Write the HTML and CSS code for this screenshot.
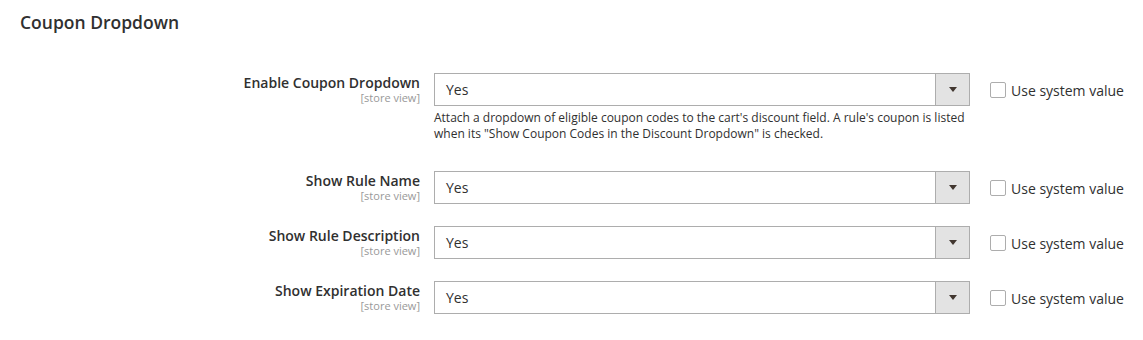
FILE: index.html
```html
<!DOCTYPE html>
<html lang="en">
<head>
    <meta charset="UTF-8">
    <meta name="viewport" content="width=device-width, initial-scale=1.0">
    <title>Coupon Dropdown</title>
    <link rel="stylesheet" href="styles.css">
</head>
<body>
    <div class="section-title">Coupon Dropdown</div>

    <div class="fieldset">
        <div class="field-row">
            <div class="field-label">
                <span class="label-text">Enable Coupon Dropdown</span>
                <span class="scope">[store view]</span>
            </div>
            <div class="field-value">
                <div class="select">
                    <span class="select-text">Yes</span>
                    <span class="select-btn"><span class="arrow"></span></span>
                </div>
                <p class="note">Attach a dropdown of eligible coupon codes to the cart's discount field. A rule's coupon is listed when its "Show Coupon Codes in the Discount Dropdown" is checked.</p>
            </div>
            <label class="use-default"><span class="checkbox"></span>Use system value</label>
        </div>

        <div class="field-row">
            <div class="field-label">
                <span class="label-text">Show Rule Name</span>
                <span class="scope">[store view]</span>
            </div>
            <div class="field-value">
                <div class="select">
                    <span class="select-text">Yes</span>
                    <span class="select-btn"><span class="arrow"></span></span>
                </div>
            </div>
            <label class="use-default"><span class="checkbox"></span>Use system value</label>
        </div>

        <div class="field-row">
            <div class="field-label">
                <span class="label-text">Show Rule Description</span>
                <span class="scope">[store view]</span>
            </div>
            <div class="field-value">
                <div class="select">
                    <span class="select-text">Yes</span>
                    <span class="select-btn"><span class="arrow"></span></span>
                </div>
            </div>
            <label class="use-default"><span class="checkbox"></span>Use system value</label>
        </div>

        <div class="field-row">
            <div class="field-label">
                <span class="label-text">Show Expiration Date</span>
                <span class="scope">[store view]</span>
            </div>
            <div class="field-value">
                <div class="select">
                    <span class="select-text">Yes</span>
                    <span class="select-btn"><span class="arrow"></span></span>
                </div>
            </div>
            <label class="use-default"><span class="checkbox"></span>Use system value</label>
        </div>
    </div>
</body>
</html>
```

FILE: styles.css
```css
body {
    margin: 0;
    padding: 12px 20px 0;
    font-family: "Open Sans", Arial, sans-serif;
    color: #303030;
    background: #fff;
}

.section-title {
    font-size: 17.5px;
    font-weight: 600;
    line-height: 20px;
    color: #303030;
}

.fieldset {
    margin-top: 41px;
}

.field-row {
    display: flex;
    align-items: flex-start;
    margin-bottom: 22px;
}

.field-label {
    flex: 0 0 400px;
    display: flex;
    flex-direction: column;
    align-items: flex-end;
    padding-right: 14px;
}

.label-text {
    font-size: 14px;
    font-weight: 600;
    line-height: 19px;
    white-space: nowrap;
}

.scope {
    font-size: 11px;
    line-height: 12px;
    color: #999;
}

.field-value {
    flex: 0 0 536px;
}

.select {
    display: flex;
    height: 33px;
    box-sizing: border-box;
    border: 1px solid #adadad;
    background: #fff;
}

.select-text {
    flex: 1;
    font-size: 14px;
    line-height: 31px;
    padding-left: 11px;
}

.select-btn {
    width: 33px;
    border-left: 1px solid #adadad;
    background: #e3e3e3;
    display: flex;
    align-items: center;
    justify-content: center;
}

.arrow {
    width: 0;
    height: 0;
    border-left: 4px solid transparent;
    border-right: 4px solid transparent;
    border-top: 5px solid #41362f;
}

.note {
    margin: 4px 0 7px;
    font-size: 12px;
    line-height: 16px;
    color: #303030;
}

.use-default {
    display: flex;
    align-items: center;
    margin-left: 20px;
    height: 33px;
    font-size: 14px;
    padding-top: 1px;
    box-sizing: border-box;
    white-space: nowrap;
}

.checkbox {
    flex-shrink: 0;
    width: 16px;
    height: 16px;
    box-sizing: border-box;
    border: 1px solid #adadad;
    border-radius: 2px;
    background: #fff;
    margin-right: 5px;
}
```
